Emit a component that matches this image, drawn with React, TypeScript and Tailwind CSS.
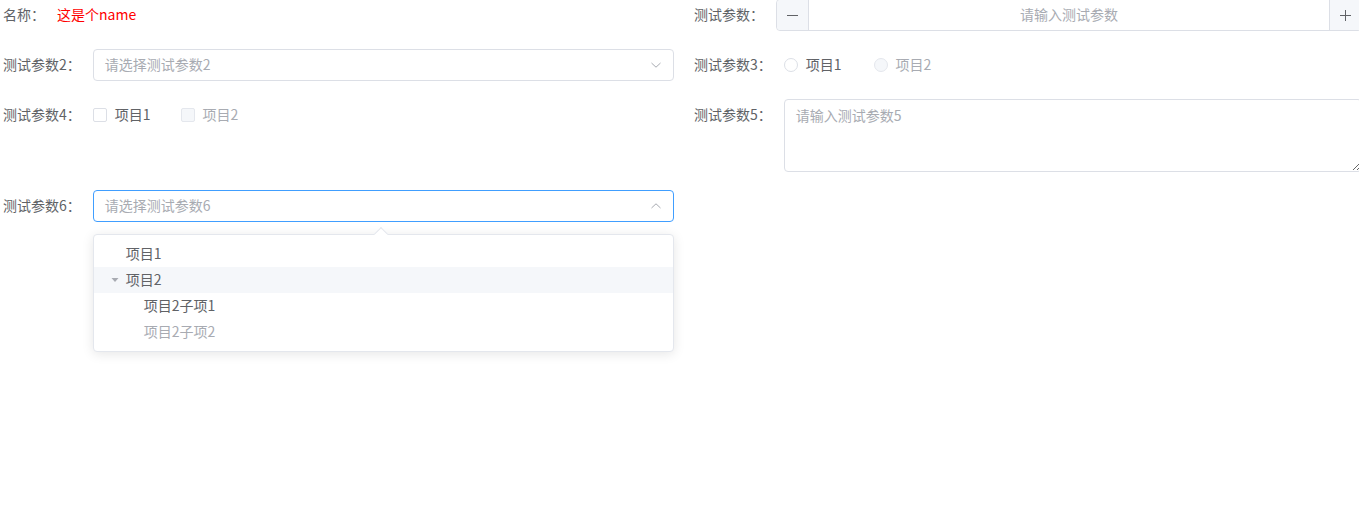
import React from "react";

const FONT = { fontFamily: '"Noto Sans CJK SC", "Noto Sans", sans-serif' };

function Chevron({ up = false }: { up?: boolean }) {
  return (
    <svg width="12" height="12" viewBox="0 0 12 12" className="text-[#a8abb2]">
      <path
        d={up ? "M1.5 8 L6 3.8 L10.5 8" : "M1.5 4 L6 8.2 L10.5 4"}
        fill="none"
        stroke="currentColor"
        strokeWidth="1"
      />
    </svg>
  );
}

function Item({ label, children, top = false }: { label: string; children: React.ReactNode; top?: boolean }) {
  return (
    <div className={`flex ${top ? "items-start" : "items-center"}`}>
      <label className="block h-[32px] shrink-0 -translate-y-px pr-3 text-[14px] leading-[32px] text-[#606266]">{label}</label>
      <div className="min-w-0 flex-1">{children}</div>
    </div>
  );
}

function Check({ text, disabled = false }: { text: string; disabled?: boolean }) {
  return (
    <span className="mr-[30px] inline-flex h-[32px] items-center">
      <span
        className={`h-[14px] w-[14px] rounded-[2px] border ${
          disabled ? "border-[#e4e7ed] bg-[#f5f7fa]" : "border-[#dcdfe6] bg-white"
        }`}
      />
      <span className={`-translate-y-px pl-2 text-[14px] ${disabled ? "text-[#a8abb2]" : "text-[#606266]"}`}>{text}</span>
    </span>
  );
}

function Radio({ text, disabled = false }: { text: string; disabled?: boolean }) {
  return (
    <span className="mr-[32px] inline-flex h-[32px] items-center">
      <span
        className={`h-[14px] w-[14px] rounded-full border ${
          disabled ? "border-[#e4e7ed] bg-[#f5f7fa]" : "border-[#dcdfe6] bg-white"
        }`}
      />
      <span className={`-translate-y-px pl-2 text-[14px] ${disabled ? "text-[#a8abb2]" : "text-[#606266]"}`}>{text}</span>
    </span>
  );
}

function Select({ placeholder, open = false }: { placeholder: string; open?: boolean }) {
  return (
    <div
      className={`flex h-[32px] items-center justify-between rounded-[4px] border bg-white pl-[11px] pr-[11px] ${
        open ? "border-[#409eff]" : "border-[#dcdfe6]"
      }`}
    >
      <span className="-translate-y-px text-[14px] text-[#a8abb2]">{placeholder}</span>
      <Chevron up={open} />
    </div>
  );
}

const tree = [
  { text: "项目1", level: 1 },
  { text: "项目2", level: 1, caret: true, hover: true },
  { text: "项目2子项1", level: 2 },
  { text: "项目2子项2", level: 2, disabled: true },
];

export default function App() {
  return (
    <div className="h-[514px] w-[1359px] overflow-hidden bg-white" style={FONT}>
      <div className="-mt-px grid grid-cols-[671px_668px] gap-x-5 gap-y-[18px] pl-[3px]">
        <Item label="名称：">
          <span className="block h-[32px] -translate-y-px text-[14px] leading-[32px] text-[#ff0000]">这是个name</span>
        </Item>
        <Item label="测试参数：">
          <div className="flex h-[32px] rounded-[4px] border border-[#dcdfe6] bg-white">
            <div className="flex w-[32px] items-center justify-center rounded-l-[4px] border-r border-[#dcdfe6] bg-[#f5f7fa] text-[#606266]">
              <span className="h-px w-[11px] bg-[#606266]" />
            </div>
            <div className="flex flex-1 -translate-y-px items-center justify-center text-[14px] text-[#a8abb2]">请输入测试参数</div>
            <div className="relative flex w-[32px] items-center justify-center rounded-r-[4px] border-l border-[#dcdfe6] bg-[#f5f7fa]">
              <span className="h-px w-[11px] bg-[#606266]" />
              <span className="absolute h-[11px] w-px bg-[#606266]" />
            </div>
          </div>
        </Item>

        <Item label="测试参数2：">
          <Select placeholder="请选择测试参数2" />
        </Item>
        <Item label="测试参数3：">
          <div className="flex">
            <Radio text="项目1" />
            <Radio text="项目2" disabled />
          </div>
        </Item>

        <Item label="测试参数4：" top>
          <div className="flex">
            <Check text="项目1" />
            <Check text="项目2" disabled />
          </div>
        </Item>
        <Item label="测试参数5：" top>
          <textarea
            readOnly
            placeholder="请输入测试参数5"
            className="block h-[73px] w-full resize-y rounded-[4px] border border-[#dcdfe6] bg-white px-[11px] py-[4px] text-[14px] leading-[22px] text-[#606266] outline-none placeholder:text-[#a8abb2]"
          />
        </Item>

        <Item label="测试参数6：">
          <div className="relative">
            <Select placeholder="请选择测试参数6" open />
            <div className="absolute left-0 right-0 top-[44px] z-10 rounded-[4px] border border-[#e4e7ed] bg-white py-[6px] shadow-[0_2px_12px_rgba(0,0,0,0.1)]">
              <span className="absolute -top-[6px] left-[282px] h-[10px] w-[10px] rotate-45 border-l border-t border-[#e4e7ed] bg-white" />
              {tree.map((n) => (
                <div
                  key={n.text}
                  className={`flex h-[26px] items-center text-[14px] ${n.hover ? "bg-[#f5f7fa]" : ""} ${
                    n.disabled ? "text-[#a8abb2]" : "text-[#606266]"
                  }`}
                  style={{ paddingLeft: n.level === 1 ? 15 : 33 }}
                >
                  <span className="flex w-[17px] items-center justify-center pr-[5px]">
                    {n.caret && (
                      <svg width="8" height="8" viewBox="0 0 8 8">
                        <path d="M0.5 2 L7.5 2 L4 6 Z" fill="#a8abb2" />
                      </svg>
                    )}
                  </span>
                  <span className="-translate-y-px">{n.text}</span>
                </div>
              ))}
            </div>
          </div>
        </Item>
        <div />
      </div>
    </div>
  );
}
